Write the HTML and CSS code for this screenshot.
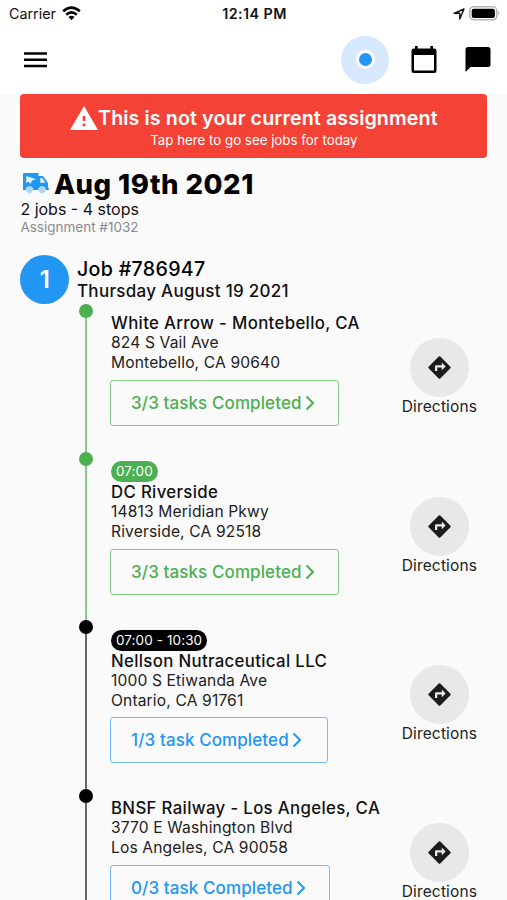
FILE: index.html
```html
<!DOCTYPE html>
<html lang="en">
<head>
<meta charset="utf-8">
<title>Assignment</title>
<link rel="stylesheet" href="styles.css">
</head>
<body>
<svg width="0" height="0" class="defs">
  <symbol id="turn" viewBox="0 0 24 24"><path d="M21.700 11.300l-9-9a1 1 0 0 0-1.400 0l-9 9a1 1 0 0 0 0 1.400l9 9a1 1 0 0 0 1.400 0l9-9a1 1 0 0 0 0-1.400zM14 14.500V12h-4v3H8v-4a1 1 0 0 1 1-1h5V7.500l3.500 3.500z"/></symbol>
  <symbol id="chevron" viewBox="0 0 10 16"><path d="M1.500 1.500L8 8L1.500 14.500" fill="none" stroke="currentColor" stroke-width="2"/></symbol>
</svg>
<div class="screen">
  <header>
    <div class="status">
      <div class="carrier"><span>Carrier</span>
        <svg width="19" height="15" viewBox="0 0 19 15"><g fill="none" stroke="#000" stroke-width="2.500"><path d="M1.200 5.300Q9.500-2 17.800 5.300"/><path d="M4.200 8.700Q9.500 4 14.800 8.700"/></g><path d="M6.500 11Q9.500 8.500 12.500 11L9.500 14.200z"/></svg>
      </div>
      <div class="clock">12:14 PM</div>
      <div class="power">
        <svg width="12" height="12" viewBox="0 0 12 12"><path d="M1 5.300L11 1L6.800 11V5.300z" fill="none" stroke="#111" stroke-width="1.400" stroke-linejoin="round"/></svg>
        <svg width="31" height="15" viewBox="0 0 31 15"><rect x=".8" y=".8" width="27" height="13" rx="4" fill="#fff" stroke="#b5b5b5" stroke-width="1.500"/><rect x="2.700" y="2.700" width="23.200" height="9.200" rx="2"/><path d="M29 5q2.500 2.300 0 4.600z" fill="#b5b5b5"/></svg>
      </div>
    </div>
    <nav class="bar">
      <svg class="menu" width="23" height="16" viewBox="0 0 23 16"><path d="M0 1.500h23M0 7.800h23M0 14.100h23" stroke="#000" stroke-width="2.500"/></svg>
      <div class="locate"><i></i></div>
      <svg class="calendar" width="26" height="28" viewBox="0 0 26 28"><path fill-rule="evenodd" d="M4 0h2.700v2.600h12.600V0H22v2.600h1A2.500 2.500 0 0 1 25.500 5v19.500a2.500 2.500 0 0 1-2.500 2.500H3a2.500 2.500 0 0 1-2.500-2.500V5A2.500 2.500 0 0 1 3 2.600h1zM3 9v15.500h20V9z"/></svg>
      <svg class="chat" width="26" height="25" viewBox="0 0 26 25"><path d="M3 0h20a2.500 2.500 0 0 1 2.500 2.500v15a2.500 2.500 0 0 1-2.500 2.500H5.500L.5 25V2.500A2.500 2.500 0 0 1 3 0z"/></svg>
    </nav>
  </header>
  <main>
    <section class="alert">
      <div class="alert-title"><svg width="28" height="24" viewBox="0 0 28 24"><path fill="#fff" fill-rule="evenodd" d="M14 0L28 24H0zM12.700 10v5h2.600v-5zM12.700 17.500v2.700h2.600v-2.700z"/></svg><span>This is not your current assignment</span></div>
      <div class="alert-sub">Tap here to go see jobs for today</div>
    </section>
    <section class="summary">
      <h1><svg width="27" height="21" viewBox="0 0 27 21"><path fill="#2196f3" d="M2 0h14.500v3h4.500l5 7v5.200h1v1.800H1V1.500A1.500 1.500 0 0 1 2 0z"/><path fill="#e6f4ff" d="M4.500 3l9.500 3.200-4 1.300-1.500 3.500-2-2.500-2.500 1.500zM18.300 5h2l3.200 4.800h-5.200z"/><g fill="#a9d6fb" stroke="#fafafa" stroke-width=".5"><circle cx="7.500" cy="17" r="3.500"/><circle cx="20" cy="17" r="3.500"/></g></svg><span>Aug 19th 2021</span></h1>
      <div class="count">2 jobs - 4 stops</div>
      <div class="number">Assignment #1032</div>
    </section>
    <section class="job">
      <div class="job-index">1</div>
      <div><div class="job-title">Job #786947</div><div class="job-date">Thursday August 19 2021</div></div>
    </section>
    <section class="stops">
      <article class="stop done">
        <div class="rail"></div>
        <div class="info"><div class="name">White Arrow - Montebello, CA</div><div class="addr">824 S Vail Ave</div><div class="addr">Montebello, CA 90640</div>
          <div class="tasks"><span>3/3 tasks Completed</span><svg><use href="#chevron"/></svg></div></div>
        <div class="directions"><div class="disc"><svg><use href="#turn"/></svg></div><span>Directions</span></div>
      </article>
      <article class="stop done timed">
        <div class="rail"></div>
        <div class="info"><div class="time">07:00</div><div class="name">DC Riverside</div><div class="addr">14813 Meridian Pkwy</div><div class="addr">Riverside, CA 92518</div>
          <div class="tasks"><span>3/3 tasks Completed</span><svg><use href="#chevron"/></svg></div></div>
        <div class="directions"><div class="disc"><svg><use href="#turn"/></svg></div><span>Directions</span></div>
      </article>
      <article class="stop timed">
        <div class="rail"></div>
        <div class="info"><div class="time">07:00 - 10:30</div><div class="name">Nellson Nutraceutical LLC</div><div class="addr">1000 S Etiwanda Ave</div><div class="addr">Ontario, CA 91761</div>
          <div class="tasks partial"><span>1/3 task Completed</span><svg><use href="#chevron"/></svg></div></div>
        <div class="directions"><div class="disc"><svg><use href="#turn"/></svg></div><span>Directions</span></div>
      </article>
      <article class="stop">
        <div class="rail"></div>
        <div class="info"><div class="name">BNSF Railway - Los Angeles, CA</div><div class="addr">3770 E Washington Blvd</div><div class="addr">Los Angeles, CA 90058</div>
          <div class="tasks none"><span>0/3 task Completed</span><svg><use href="#chevron"/></svg></div></div>
        <div class="directions"><div class="disc"><svg><use href="#turn"/></svg></div><span>Directions</span></div>
      </article>
    </section>
  </main>
</div>
</body>
</html>
```
FILE: styles.css
```css
* { box-sizing: border-box; }
body { margin: 0; font-family: Inter, "Liberation Sans", sans-serif; color: #111; background: #fafafa; }
svg { display: block; flex: none; }
.defs { display: none; }
.screen { height: 900px; overflow: hidden; white-space: nowrap; }
header { height: 94px; background: #fff; }
.status { display: grid; grid-template-columns: 1fr auto 1fr; height: 27px; padding: 0 7px 0 9px; align-items: center; font-size: 14.3px; }
.carrier { display: flex; align-items: center; gap: 6px; }
.carrier svg { margin-top: -1px; }
.clock { font-weight: 600; letter-spacing: .45px; }
.power { display: flex; align-items: center; justify-content: flex-end; gap: 4px; }
.bar { display: flex; align-items: center; height: 65px; padding: 0 16px 0 24px; }
.locate { width: 48px; height: 48px; margin-left: auto; border-radius: 50%; background: #d6e9ff; display: grid; place-items: center; }
.locate i { width: 19px; height: 19px; border-radius: 50%; background: #2196f3; border: 3px solid #fff; }
.calendar { margin-left: 22px; }
.chat { margin-left: 28px; }
main { padding: 0 19.600px 0 20.400px; }
.alert { height: 64.400px; border-radius: 4px; background: #f44336; color: #fff; display: flex; flex-direction: column; align-items: center; padding-top: 11.500px; }
.alert-title { display: flex; align-items: center; height: 25px; font-size: 19.700px; font-weight: 600; letter-spacing: .1px; }
.alert-sub { height: 20px; line-height: 19px; font-size: 13.300px; }
.summary { padding-top: 10.600px; }
h1 { margin: 0; height: 30px; display: flex; align-items: center; gap: 5px; padding-left: 1.500px; font-size: 27.500px; font-weight: 800; letter-spacing: .5px; color: #000; }
.count { height: 20px; line-height: 20px; font-size: 16px; }
.number { height: 17px; line-height: 16px; font-size: 13.500px; color: #8a8a8a; }
.job { height: 68px; padding-top: 19px; display: flex; gap: 7.600px; }
.job-index { width: 49px; height: 49px; border-radius: 50%; background: #2196f3; color: #fff; display: grid; place-items: center; font-size: 24px; font-weight: 600; }
.job-title { height: 24px; line-height: 29px; font-size: 19.600px; font-weight: 500; letter-spacing: .33px; color: #000; }
.job-date { height: 22px; line-height: 24px; font-size: 17px; font-weight: 500; letter-spacing: .29px; }
.stops { padding-left: 58.600px; }
.stop { height: 148px; display: flex; align-items: center; color: #222; --rail: #000; --line: #666; }
.stop.timed { height: 168.500px; }
.stop.done { --rail: #4caf50; --line: #87cb8a; }
.rail { align-self: stretch; width: 14px; background: linear-gradient(var(--line), var(--line)) center / 2px 100% no-repeat; }
.rail::before { content: ""; display: block; width: 14px; height: 14px; border-radius: 50%; background: var(--rail); }
.info { align-self: stretch; padding: 9.500px 0 0 17px; flex: 1; }
.time { width: max-content; height: 21px; line-height: 21px; padding: 0 5px; margin-left: 1px; border-radius: 11px; background: var(--rail); color: #fff; font-size: 13.500px; letter-spacing: .1px; }
.name { height: 20px; line-height: 20px; padding-left: 1px; font-size: 16.800px; font-weight: 500; letter-spacing: .34px; color: #111; }
.addr { height: 19.700px; line-height: 20.500px; padding-left: 1px; font-size: 15.600px; letter-spacing: .14px; }
.tasks { width: 229px; height: 46px; margin-top: 7px; padding-left: 20px; border: 1.500px solid #87cb8a; border-radius: 3px; display: flex; align-items: center; gap: 3px; font-size: 17px; font-weight: 500; letter-spacing: .1px; color: #4caf50; }
.tasks svg { width: 10px; height: 16px; }
.tasks.partial { width: 218px; }
.tasks.none { width: 220px; }
.tasks.partial, .tasks.none { color: #2196f3; border-color: #76bdf6; }
.directions { width: 76px; margin-right: 10px; display: flex; flex-direction: column; align-items: center; font-size: 15.500px; letter-spacing: .15px; line-height: 20px; }
.disc { width: 59px; height: 59px; border-radius: 50%; background: #e8e8e8; display: grid; place-items: center; }
.disc svg { width: 27px; height: 27px; fill: #1c1c1c; }
```
